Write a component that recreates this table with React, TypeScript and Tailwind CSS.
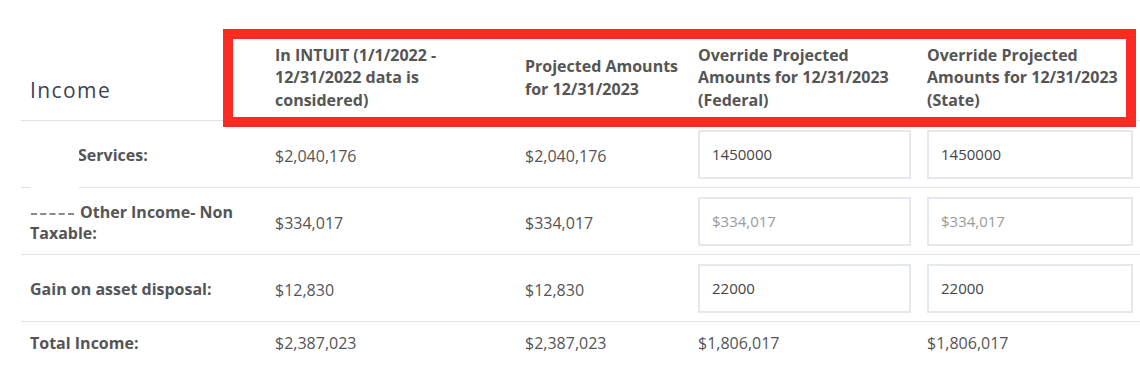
import React from "react";

const cols = "grid grid-cols-[245px_250px_173px_229px_224px]";

const rows = [
  { label: "Services:", intuit: "$2,040,176", projected: "$2,040,176", fed: "1450000", state: "1450000", indent: "pl-[57px]" },
  { label: "Other Income- Non Taxable:", intuit: "$334,017", projected: "$334,017", fed: "", state: "", placeholder: "$334,017", indent: "pl-[9px] indent-[50px]" },
  { label: "Gain on asset disposal:", intuit: "$12,830", projected: "$12,830", fed: "22000", state: "22000", indent: "pl-[9px]" },
];

function Field({ value, placeholder, width }: { value: string; placeholder?: string; width: string }) {
  return (
    <input
      readOnly
      value={value}
      placeholder={placeholder}
      className={`${width} h-[49px] border-2 border-[#e5e8ec] bg-white px-[12px] text-[15px] text-[#444] placeholder:text-[#9a9a9a] outline-none`}
    />
  );
}

export default function App() {
  return (
    <main className="relative h-[388px] w-[1140px] overflow-hidden bg-white pl-[21px] pt-[33px] font-['Open_Sans',sans-serif] text-[16px] text-[#555]">
      <div className={`${cols} h-[88px] items-center border-b border-[#e2e2e2] pt-[2px] text-[16px] font-bold leading-[22.5px] text-[#555]`}>
        <div className="self-end pb-[16px] pl-[9px] text-[21px] font-normal leading-[28px] tracking-[1.4px] text-[#3d4354]">
          Income
        </div>
        <div className="pl-[9px] pr-[40px]">In INTUIT (1/1/2022 - 12/31/2022 data is considered)</div>
        <div className="pl-[9px] pr-[4px]">Projected Amounts for 12/31/2023</div>
        <div className="pl-[9px] pr-[8px]">Override Projected Amounts for 12/31/2023 (Federal)</div>
        <div className="pl-[9px] pr-[6px]">Override Projected Amounts for 12/31/2023 (State)</div>
      </div>

      {rows.map((r) => (
        <div key={r.label} className={`${cols} h-[67px] items-center border-b border-[#e2e2e2]`}>
          <div className={`${r.indent} pr-[20px] pt-[4px] font-bold leading-[21.5px]`}>{r.label}</div>
          <div className="pl-[9px] pt-[4px]">{r.intuit}</div>
          <div className="pl-[9px] pt-[4px]">{r.projected}</div>
          <div className="pl-[9px]">
            <Field value={r.fed} placeholder={r.placeholder} width="w-[213px]" />
          </div>
          <div className="pl-[9px]">
            <Field value={r.state} placeholder={r.placeholder} width="w-[206px]" />
          </div>
        </div>
      ))}

      <div className={`${cols} pt-[10px] leading-[22px]`}>
        <div className="pl-[9px] font-bold">Total Income:</div>
        <div className="pl-[9px]">$2,387,023</div>
        <div className="pl-[9px]">$2,387,023</div>
        <div className="pl-[9px]">$1,806,017</div>
        <div className="pl-[9px]">$1,806,017</div>
      </div>

      {/* redaction */}
      <div className="absolute left-[30px] top-[126px] h-[86px] w-[49px] bg-white" />
      <div className="absolute left-[31px] top-[213px] w-[43px] border-t-2 border-dashed border-[#8a8a8a]" />

      {/* annotation box */}
      <div className="absolute left-[223px] top-[29px] h-[98px] w-[913px] border-[10px] border-[#fc2a20]" />
    </main>
  );
}
